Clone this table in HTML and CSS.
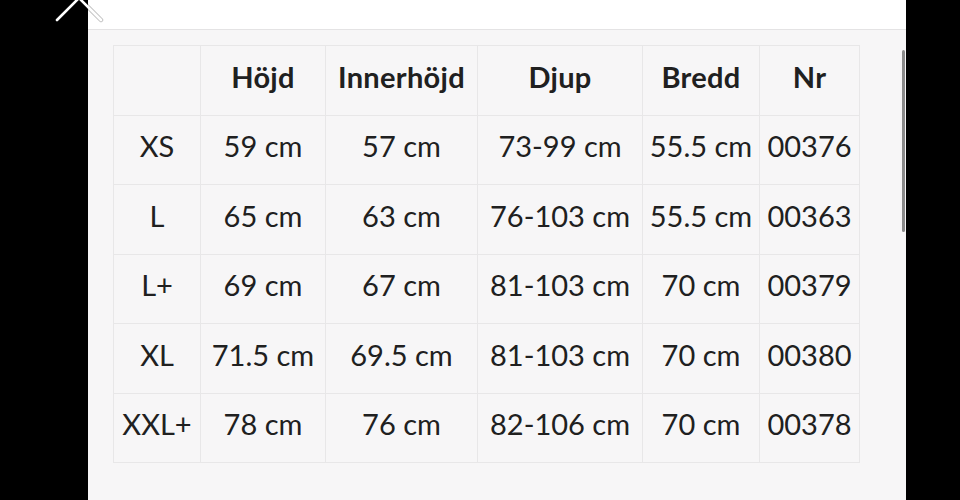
FILE: index.html
```html
<!DOCTYPE html>
<html lang="sv">
<head>
<meta charset="utf-8">
<title>Storlekstabell</title>
<link rel="stylesheet" href="styles.css">
</head>
<body>
<div class="screen">
  <div class="side side-left"></div>
  <div class="panel">
    <div class="panel-top"></div>
    <div class="panel-body">
      <table class="sizes">
        <colgroup>
          <col class="c1"><col class="c2"><col class="c3"><col class="c4"><col class="c5"><col class="c6">
        </colgroup>
        <thead>
          <tr><th></th><th>Höjd</th><th>Innerhöjd</th><th>Djup</th><th>Bredd</th><th>Nr</th></tr>
        </thead>
        <tbody>
          <tr><td>XS</td><td>59 cm</td><td>57 cm</td><td>73-99 cm</td><td>55.5 cm</td><td>00376</td></tr>
          <tr><td>L</td><td>65 cm</td><td>63 cm</td><td>76-103 cm</td><td>55.5 cm</td><td>00363</td></tr>
          <tr><td>L+</td><td>69 cm</td><td>67 cm</td><td>81-103 cm</td><td>70 cm</td><td>00379</td></tr>
          <tr><td>XL</td><td>71.5 cm</td><td>69.5 cm</td><td>81-103 cm</td><td>70 cm</td><td>00380</td></tr>
          <tr><td>XXL+</td><td>78 cm</td><td>76 cm</td><td>82-106 cm</td><td>70 cm</td><td>00378</td></tr>
        </tbody>
      </table>
      <div class="scrollbar"></div>
    </div>
  </div>
  <div class="side side-right"></div>
  <svg class="close" width="60" height="40" viewBox="0 0 60 40" aria-label="Stäng">
    <g stroke-linecap="round" fill="none">
      <path d="M7 28 L29 6 M29 6 L51 28" stroke="rgba(0,0,0,0.25)" stroke-width="4.5"/>
      <path d="M7 28 L29 6 M29 6 L51 28" stroke="#ffffff" stroke-width="2.6"/>
    </g>
  </svg>
</div>
</body>
</html>
```

FILE: styles.css
```css
html, body {
  margin: 0;
  padding: 0;
  background: #000;
}

.screen {
  position: relative;
  width: 960px;
  height: 500px;
  display: flex;
  overflow: hidden;
  background: #000;
}

.side-left {
  width: 88px;
  flex: none;
  background: #000;
}

.side-right {
  flex: 1;
  background: #000;
}

.panel {
  width: 818px;
  flex: none;
  display: flex;
  flex-direction: column;
  background: #f7f6f7;
}

.panel-top {
  height: 30px;
  flex: none;
  background: #ffffff;
  border-bottom: 1px solid #e4e3e4;
  box-sizing: border-box;
}

.panel-body {
  position: relative;
  flex: 1;
  padding: 15px 0 0 25px;
}

.sizes {
  border-collapse: collapse;
  table-layout: fixed;
  width: 746px;
  font-family: "Lato", "Noto Sans", sans-serif;
  font-size: 29px;
  color: #202020;
}

.c1 { width: 87px; }
.c2 { width: 125px; }
.c3 { width: 152px; }
.c4 { width: 165px; }
.c5 { width: 117px; }
.c6 { width: 100px; }

.sizes th,
.sizes td {
  height: 69.5px;
  padding: 0 0 8px 0;
  border: 1.5px solid #e8e7e8;
  text-align: center;
  vertical-align: middle;
  white-space: nowrap;
  box-sizing: border-box;
}

.sizes th {
  font-weight: 700;
  letter-spacing: 0.3px;
}

.sizes td {
  font-weight: 400;
}

.scrollbar {
  position: absolute;
  right: 1px;
  top: 20px;
  width: 3px;
  height: 182px;
  background: #8a8a8a;
  border-radius: 2px;
}

.close {
  position: absolute;
  left: 50px;
  top: -8px;
}
```
